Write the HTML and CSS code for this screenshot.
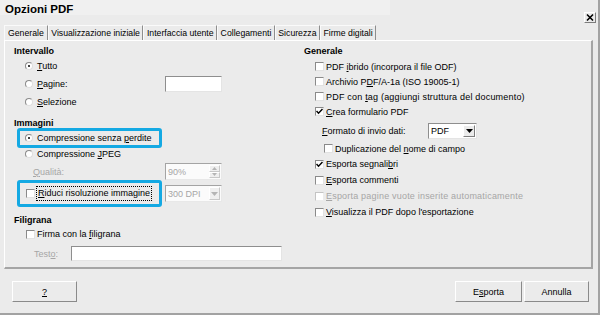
FILE: index.html
```html
<!DOCTYPE html>
<html lang="it">
<head>
    <meta charset="UTF-8">
    <title>Opzioni PDF</title>
    <link rel="stylesheet" href="styles.css">
</head>
<body>
<div class="dialog">
    <div class="titlebar">
        <span class="title">Opzioni PDF</span>
        <span class="close">
            <svg width="10" height="9" viewBox="0 0 10 9"><path d="M2 1.5 L8 7.5 M8 1.5 L2 7.5" stroke="#000" stroke-width="1.6"/></svg>
        </span>
    </div>

    <div class="tabs">
        <span class="tab active">Generale</span>
        <span class="tab">Visualizzazione iniziale</span>
        <span class="tab">Interfaccia utente</span>
        <span class="tab">Collegamenti</span>
        <span class="tab">Sicurezza</span>
        <span class="tab">Firme digitali</span>
    </div>

    <div class="panel">
        <!-- left column -->
        <div class="col">
            <div class="heading">Intervallo</div>
            <div class="opt"><span class="radio on"></span><span><u>T</u>utto</span></div>
            <div class="opt opt-input"><span class="radio"></span><span class="lbl-pages"><u>P</u>agine:</span><span class="edit edit-small"></span></div>
            <div class="opt"><span class="radio"></span><span><u>S</u>elezione</span></div>

            <div class="heading heading-img">Immagini</div>
            <div class="hl"><span class="radio on"></span><span>Compressione senza <u>p</u>erdite</span></div>
            <div class="opt opt-short"><span class="radio"></span><span>Compressione <u>J</u>PEG</span></div>
            <div class="field field-quality">
                <span class="lbl dim lbl-quality"><u>Q</u>ualità:</span>
                <span class="spin">
                    <span class="dim">90%</span>
                    <span class="spin-btns">
                        <span class="spin-btn"><svg width="5" height="3" viewBox="0 0 5 3"><path d="M0 3 L2.5 0 L5 3 Z" fill="#b4b4b4"/></svg></span>
                        <span class="spin-btn"><svg width="5" height="3" viewBox="0 0 5 3"><path d="M0 0 L2.5 3 L5 0 Z" fill="#b4b4b4"/></svg></span>
                    </span>
                </span>
            </div>
            <div class="row-reduce">
                <div class="hl hl-tall"><span class="check"></span><span class="focus"><u>R</u>iduci risoluzione immagine</span></div>
                <span class="combo combo-dpi">
                    <span class="dim">300 DPI</span>
                    <span class="drop drop-off"><svg width="7" height="4" viewBox="0 0 7 4"><path d="M0 0 L7 0 L3.5 4 Z" fill="#b4b4b4"/></svg></span>
                </span>
            </div>

            <div class="heading heading-wm">Filigrana</div>
            <div class="opt opt-wm"><span class="check"></span><span>Firma con la <u>f</u>iligrana</span></div>
            <div class="field field-text">
                <span class="lbl dim lbl-text">Test<u>o</u>:</span>
                <span class="edit edit-wide"></span>
            </div>
        </div>

        <!-- right column -->
        <div class="col">
            <div class="heading">Generale</div>
            <div class="opt opt-top"><span class="check"></span><span>PDF <u>i</u>brido (incorpora il file ODF)</span></div>
            <div class="opt opt-r"><span class="check"></span><span>Archivio P<u>D</u>F/A-1a (ISO 19005-1)</span></div>
            <div class="opt opt-r"><span class="check"></span><span class="wide">PDF con <u>t</u>ag (aggiungi struttura del documento)</span></div>
            <div class="opt opt-r"><span class="check on"><svg width="7" height="7" viewBox="0 0 7 7"><path d="M0.5 3 L2.5 5.2 L6.5 1" stroke="#000" stroke-width="1.5" fill="none"/></svg></span><span><u>C</u>rea formulario PDF</span></div>
            <div class="field field-format">
                <span class="lbl lbl-format"><u>F</u>ormato di invio dati:</span>
                <span class="combo combo-fmt">
                    <span>PDF</span>
                    <span class="drop"><svg width="7" height="4" viewBox="0 0 7 4"><path d="M0 0 L7 0 L3.5 4 Z" fill="#000"/></svg></span>
                </span>
            </div>
            <div class="opt opt-dup"><span class="check"></span><span>Duplicazione del <u>n</u>ome di campo</span></div>
            <div class="opt opt-r16"><span class="check on"><svg width="7" height="7" viewBox="0 0 7 7"><path d="M0.5 3 L2.5 5.2 L6.5 1" stroke="#000" stroke-width="1.5" fill="none"/></svg></span><span>Esporta segnali<u>b</u>ri</span></div>
            <div class="opt opt-r16"><span class="check"></span><span><u>E</u>sporta commenti</span></div>
            <div class="opt opt-r16 dim"><span class="check check-off"></span><span class="wide"><u>E</u>sporta pagine vuote inserite automaticamente</span></div>
            <div class="opt opt-r16"><span class="check"></span><span><u>V</u>isualizza il PDF dopo l'esportazione</span></div>
        </div>
    </div>

    <div class="buttons">
        <button class="btn btn-help"><u>?</u></button>
        <button class="btn btn-export">E<u>s</u>porta</button>
        <button class="btn btn-cancel">Annulla</button>
    </div>
</div>
</body>
</html>
```

FILE: styles.css
```css
body {
    margin: 0;
    background: #ebebeb;
    font-family: "Liberation Sans", Arial, sans-serif;
    font-size: 9px;
    color: #000;
}
u {
    text-underline-offset: 1px;
}
.dialog {
    width: 600px;
    height: 315px;
    box-sizing: border-box;
    border-right: 2px solid #a2a2a2;
    border-bottom: 2px solid #a2a2a2;
    display: flex;
    flex-direction: column;
}
.titlebar {
    height: 24px;
    display: flex;
    background: linear-gradient(#f0f0f0, #f0f0f0) no-repeat 0 0 / 390px 15px;
}
.title {
    font-size: 11.5px;
    font-weight: bold;
    line-height: 12px;
    padding: 3px 0 0 5px;
}
.close {
    margin: 12px 2px 0 auto;
    width: 12px;
    height: 11px;
    box-sizing: border-box;
    border: 1px solid;
    border-color: #fff #7c7c7c #7c7c7c #fff;
    display: flex;
    align-items: center;
    justify-content: center;
}
.close svg {
    display: block;
}

/* tabs */
.tabs {
    display: flex;
    height: 15px;
    margin-top: 1px;
    padding-left: 4px;
}
.tab {
    font-size: 8.7px;
    line-height: 14px;
    padding: 0 2.5px;
    border-top: 1px solid #fafafa;
    border-left: 1px solid #fafafa;
    border-right: 1px solid #8e8e8e;
    white-space: nowrap;
}
.tab.active {
    padding: 0 3px;
}

/* panel */
.panel {
    margin-left: 4px;
    width: 589px;
    height: 229px;
    box-sizing: border-box;
    border-top: 1px solid #fff;
    border-left: 1px solid #fff;
    border-right: 2px solid #a5a5a5;
    border-bottom: 2px solid #a5a5a5;
    padding-left: 9px;
    display: grid;
    grid-template-columns: 290px 1fr;
}
.col {
    padding-top: 5px;
}
.heading {
    font-weight: bold;
    height: 11px;
    line-height: 11px;
}
.heading-img {
    margin-top: 7px;
    height: 10px;
    line-height: 10px;
}
.heading-wm {
    margin-top: 7px;
    height: 12px;
    line-height: 12px;
}
.opt {
    display: flex;
    align-items: center;
    height: 18px;
    padding-left: 11px;
    white-space: nowrap;
}
.opt-short {
    height: 12px;
}
.opt-wm {
    height: 14px;
    margin-top: 1px;
    padding-left: 12px;
}
.opt-top {
    margin-top: 2px;
    height: 15px;
}
.opt-r {
    height: 15px;
}
.opt-dup {
    margin-top: 2px;
    height: 15px;
    padding-left: 20px;
}
.opt-r16 {
    height: 16px;
}
.wide {
    letter-spacing: 0.2px;
}
.lbl-pages {
    width: 128px;
}
.dim {
    color: #a6a6a6;
}

/* radio + checkbox */
.radio {
    width: 8px;
    height: 8px;
    box-sizing: border-box;
    border-radius: 50%;
    background: #fff;
    border: 1px solid;
    border-color: #8a8a8a #dedede #dedede #8a8a8a;
    margin-right: 4px;
    display: flex;
    align-items: center;
    justify-content: center;
    flex: none;
}
.radio.on::after {
    content: "";
    width: 2px;
    height: 2px;
    background: #000;
    border-radius: 50%;
}
.check {
    width: 9px;
    height: 9px;
    box-sizing: border-box;
    background: #fff;
    border: 1px solid;
    border-color: #8a8a8a #e2e2e2 #e2e2e2 #8a8a8a;
    margin-right: 2px;
    display: flex;
    align-items: center;
    justify-content: center;
    flex: none;
}
.check svg {
    display: block;
}
.check-off {
    border-color: #c4c4c4 #ececec #ececec #c4c4c4;
}

/* highlighted boxes */
.hl {
    margin-left: 3px;
    width: 145px;
    height: 20px;
    box-sizing: border-box;
    border: 3px solid #14a9e3;
    border-radius: 3px;
    padding-left: 5px;
    display: flex;
    align-items: center;
    white-space: nowrap;
}
.hl-tall {
    height: 27px;
    padding-left: 6px;
}
.focus {
    border: 1px dotted #000;
    padding: 1px 1px 1px 1px;
    margin-left: -1px;
    line-height: 11px;
}
.row-reduce {
    display: flex;
    align-items: center;
}

/* fields */
.field {
    display: flex;
    align-items: center;
}
.field-quality {
    height: 17px;
    margin-top: 3px;
    padding-left: 19px;
}
.lbl-quality {
    width: 132px;
}
.field-text {
    height: 15px;
    margin-top: 5px;
    padding-left: 20px;
}
.lbl-text {
    width: 37px;
}
.field-format {
    height: 16px;
    margin-top: 4px;
    padding-left: 18px;
}
.lbl-format {
    width: 106px;
}
.edit {
    display: block;
    box-sizing: border-box;
    background: #fff;
    border: 1px solid;
    border-color: #8e8e8e #e4e4e4 #e4e4e4 #8e8e8e;
}
.edit-small {
    width: 57px;
    height: 16px;
}
.edit-wide {
    width: 211px;
    height: 15px;
}
.spin, .combo {
    display: flex;
    align-items: center;
    box-sizing: border-box;
    background: #fbfbfb;
    border: 1px solid;
    border-color: #a4a4a4 #e8e8e8 #e8e8e8 #a4a4a4;
    padding-left: 2px;
}
.spin {
    width: 57px;
    height: 17px;
}
.spin-btns {
    margin-left: auto;
    margin-right: 1px;
    width: 11px;
    height: 13px;
    display: flex;
    flex-direction: column;
}
.spin-btn {
    flex: 1;
    display: flex;
    align-items: center;
    justify-content: center;
    border: 1px solid;
    border-color: #fff #c8c8c8 #c8c8c8 #fff;
    background: #efefef;
}
.spin-btn svg, .drop svg {
    display: block;
}
.combo-dpi {
    margin-left: 3px;
    width: 57px;
    height: 17px;
}
.combo-fmt {
    width: 49px;
    height: 16px;
    background: #fff;
    border-color: #8e8e8e #e4e4e4 #e4e4e4 #8e8e8e;
}
.drop {
    margin-left: auto;
    margin-right: 1px;
    width: 12px;
    height: 12px;
    box-sizing: border-box;
    display: flex;
    align-items: center;
    justify-content: center;
    background: #ebebeb;
    border: 1px solid;
    border-color: #fff #7e7e7e #7e7e7e #fff;
}
.drop-off {
    width: 11px;
    height: 13px;
    border-color: #fff #c8c8c8 #c8c8c8 #fff;
    background: #efefef;
}

/* bottom buttons */
.buttons {
    display: flex;
    margin-top: 12px;
    height: 21px;
    padding: 0 9px 0 12px;
}
.btn {
    height: 21px;
    box-sizing: border-box;
    background: #ebebeb;
    border: 1px solid;
    border-color: #fff #8a8a8a #8a8a8a #fff;
    font: inherit;
    color: #000;
    padding: 0;
}
.btn-help {
    width: 65px;
}
.btn-export {
    width: 67px;
    margin-left: auto;
}
.btn-cancel {
    width: 65px;
    margin-left: 2px;
}
```
